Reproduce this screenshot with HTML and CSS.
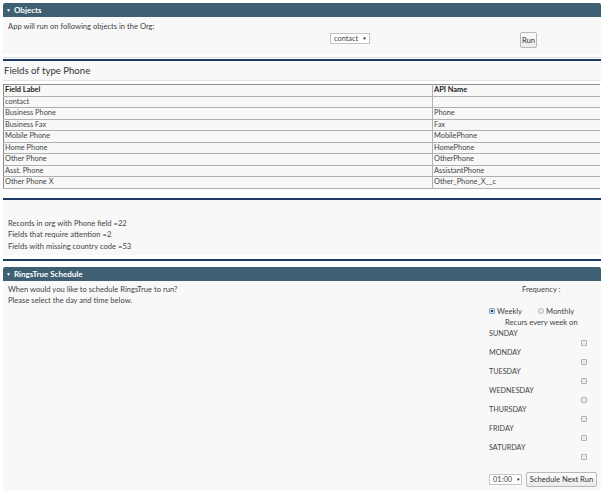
FILE: index.html
```html
<!DOCTYPE html>
<html lang="en">
<head>
<meta charset="utf-8">
<title>RingsTrue</title>
<link rel="stylesheet" href="styles.css">
</head>
<body>
<div class="page">
  <section class="block objects">
    <div class="bar"><span class="tri">&#9660;</span>Objects</div>
    <div class="objects-body">
      <p class="intro">App will run on following objects in the Org:</p>
      <div class="obj-controls">
        <span class="select sel-contact">contact<span class="caret">&#9660;</span></span>
        <span class="btn btn-run">Run</span>
      </div>
    </div>
  </section>

  <section class="block fields">
    <h2 class="fields-title">Fields of type Phone</h2>
    <table class="grid">
      <tr><th>Field Label</th><th>API Name</th></tr>
      <tr><td>contact</td><td></td></tr>
      <tr><td>Business Phone</td><td>Phone</td></tr>
      <tr><td>Business Fax</td><td>Fax</td></tr>
      <tr><td>Mobile Phone</td><td>MobilePhone</td></tr>
      <tr><td>Home Phone</td><td>HomePhone</td></tr>
      <tr><td>Other Phone</td><td>OtherPhone</td></tr>
      <tr><td>Asst. Phone</td><td>AssistantPhone</td></tr>
      <tr><td>Other Phone X</td><td>Other_Phone_X__c</td></tr>
    </table>
  </section>

  <section class="block stats">
    <p>Records in org with Phone field =22</p>
    <p>Fields that require attention =2</p>
    <p>Fields with missing country code =53</p>
  </section>

  <section class="block schedule">
    <div class="bar"><span class="tri">&#9660;</span>RingsTrue Schedule</div>
    <div class="sched-body">
      <div class="sched-left">
        <p>When would you like to schedule RingsTrue to run?</p>
        <p>Please select the day and time below.</p>
      </div>
      <div class="sched-right">
        <p class="freq">Frequency :</p>
        <div class="radios">
          <span class="radio checked"></span><span class="rlabel">Weekly</span>
          <span class="radio monthly"></span><span class="rlabel">Monthly</span>
        </div>
        <p class="recurs">Recurs every week on</p>
        <div class="day"><span class="dlabel">SUNDAY</span><span class="cbrow"><span class="cb"></span></span></div>
        <div class="day"><span class="dlabel">MONDAY</span><span class="cbrow"><span class="cb"></span></span></div>
        <div class="day"><span class="dlabel">TUESDAY</span><span class="cbrow"><span class="cb"></span></span></div>
        <div class="day"><span class="dlabel">WEDNESDAY</span><span class="cbrow"><span class="cb"></span></span></div>
        <div class="day"><span class="dlabel">THURSDAY</span><span class="cbrow"><span class="cb"></span></span></div>
        <div class="day"><span class="dlabel">FRIDAY</span><span class="cbrow"><span class="cb"></span></span></div>
        <div class="day"><span class="dlabel">SATURDAY</span><span class="cbrow"><span class="cb"></span></span></div>
        <div class="sched-controls">
          <span class="select sel-time">01:00<span class="caret">&#9660;</span></span>
          <span class="btn btn-sched">Schedule Next Run</span>
        </div>
      </div>
    </div>
  </section>
</div>
</body>
</html>
```

FILE: styles.css
```css
html, body {
  margin: 0;
  padding: 0;
  background: #ffffff;
}
body {
  font-family: "Lato", "Open Sans", "Liberation Sans", sans-serif;
  font-size: 7.6px;
  color: #444444;
}
p { margin: 0; }

.page {
  width: 598px;
  padding: 3px 1px 0 3px;
}

.block {
  background: #f8f8f8;
}

.bar {
  height: 14px;
  line-height: 14px;
  background: #3f5f73;
  color: #ffffff;
  font-weight: bold;
  font-size: 8px;
  padding-left: 3px;
  border-radius: 2px 2px 0 0;
}
.tri {
  font-size: 5px;
  vertical-align: 1px;
  margin-right: 3px;
}

/* Objects */
.objects-body {
  height: 37px;
  box-sizing: border-box;
  padding: 4px 0 0 5px;
}
.intro {
  line-height: 11px;
}
.obj-controls {
  display: flex;
  align-items: flex-start;
}
.select {
  display: inline-flex;
  align-items: center;
  justify-content: space-between;
  box-sizing: border-box;
  height: 11px;
  background: #ffffff;
  border: 1px solid #c4c4c4;
  padding: 0 3px;
  font-size: 7.4px;
  color: #444;
}
.caret {
  font-size: 4.5px;
  color: #222;
  margin-left: 4px;
}
.sel-contact {
  margin-left: 322px;
  margin-top: 1px;
  width: 40px;
}
.btn {
  display: inline-flex;
  align-items: center;
  justify-content: center;
  box-sizing: border-box;
  border: 1px solid #b8b8b8;
  border-radius: 2px;
  background: linear-gradient(#fbfbfb, #ececec);
  color: #333;
  font-size: 7.6px;
}
.btn-run {
  margin-left: 150px;
  width: 17px;
  height: 16px;
}

/* Fields */
.fields {
  margin-top: 3px;
  border-top: 1px solid #d4dbe2;
  padding-top: 1px;
  background: #ffffff;
}
.fields-title {
  margin: 0;
  background: #f8f8f8;
  border-top: 2px solid #1d3b64;
  height: 19px;
  line-height: 19px;
  font-size: 9.6px;
  font-weight: normal;
  color: #333;
  padding-left: 1px;
  border-bottom: 1px solid #e4e4e4;
}
.grid {
  margin-top: 3px;
  width: 597px;
  border-collapse: collapse;
  background: #f8f8f8;
  font-size: 7.4px;
  color: #444;
  border-left: 1px solid #888;
}
.grid th, .grid td {
  height: 10.5px;
  line-height: 10px;
  padding: 0 1px;
  text-align: left;
  border-top: 1px solid #b0b0b0;
  border-bottom: 1px solid #b0b0b0;
}
.grid th {
  font-weight: bold;
  color: #222;
  border-top: 1px solid #8c8c8c;
}
.grid th:first-child, .grid td:first-child {
  width: 426px;
  border-right: 1px solid #b0b0b0;
}

/* Stats */
.stats {
  margin-top: 9px;
  border-top: 2px solid #1d3b64;
  height: 57px;
  box-sizing: border-box;
  padding: 18px 0 0 5px;
}
.stats p {
  line-height: 11.5px;
}

/* Schedule */
.schedule {
  margin-top: 4px;
  border-top: 2px solid #1d3b64;
  padding-top: 6px;
  background: #ffffff;
}
.sched-body {
  display: flex;
  background: #f8f8f8;
  height: 210px;
  box-sizing: border-box;
  padding-top: 3px;
}
.sched-left {
  flex: 1;
  padding-left: 5px;
}
.sched-left p {
  line-height: 11px;
}
.sched-right {
  width: 112px;
}
.freq {
  line-height: 11px;
  padding-left: 33px;
}
.radios {
  margin-top: 11px;
  height: 11px;
  display: flex;
  align-items: center;
}
.radio {
  display: inline-block;
  box-sizing: border-box;
  width: 6px;
  height: 6px;
  border-radius: 50%;
  border: 1px solid #b8b8b8;
  background: #ededed;
}
.radio.checked {
  border-radius: 1px;
  border: 1px solid #7fa4d6;
  background: radial-gradient(circle, #333 0 1.3px, #dce8f8 1.6px);
}
.radio.monthly {
  margin-left: 16px;
}
.rlabel {
  margin-left: 2px;
}
.recurs {
  line-height: 11px;
  padding-left: 16px;
  margin-bottom: 1px;
}
.day {
  display: flex;
  flex-direction: column;
}
.dlabel {
  line-height: 10px;
  height: 10px;
  font-size: 7.2px;
}
.cbrow {
  height: 9px;
  display: flex;
  align-items: center;
  justify-content: flex-end;
  padding-right: 14px;
}
.cb {
  display: inline-block;
  box-sizing: border-box;
  width: 6px;
  height: 6px;
  border: 1px solid #b4b4b4;
  border-radius: 1px;
  background: #ececec;
}
.sched-controls {
  margin-top: 10px;
  display: flex;
  align-items: center;
}
.sel-time {
  width: 33px;
}
.btn-sched {
  margin-left: 4px;
  width: 71px;
  height: 15px;
}
```
